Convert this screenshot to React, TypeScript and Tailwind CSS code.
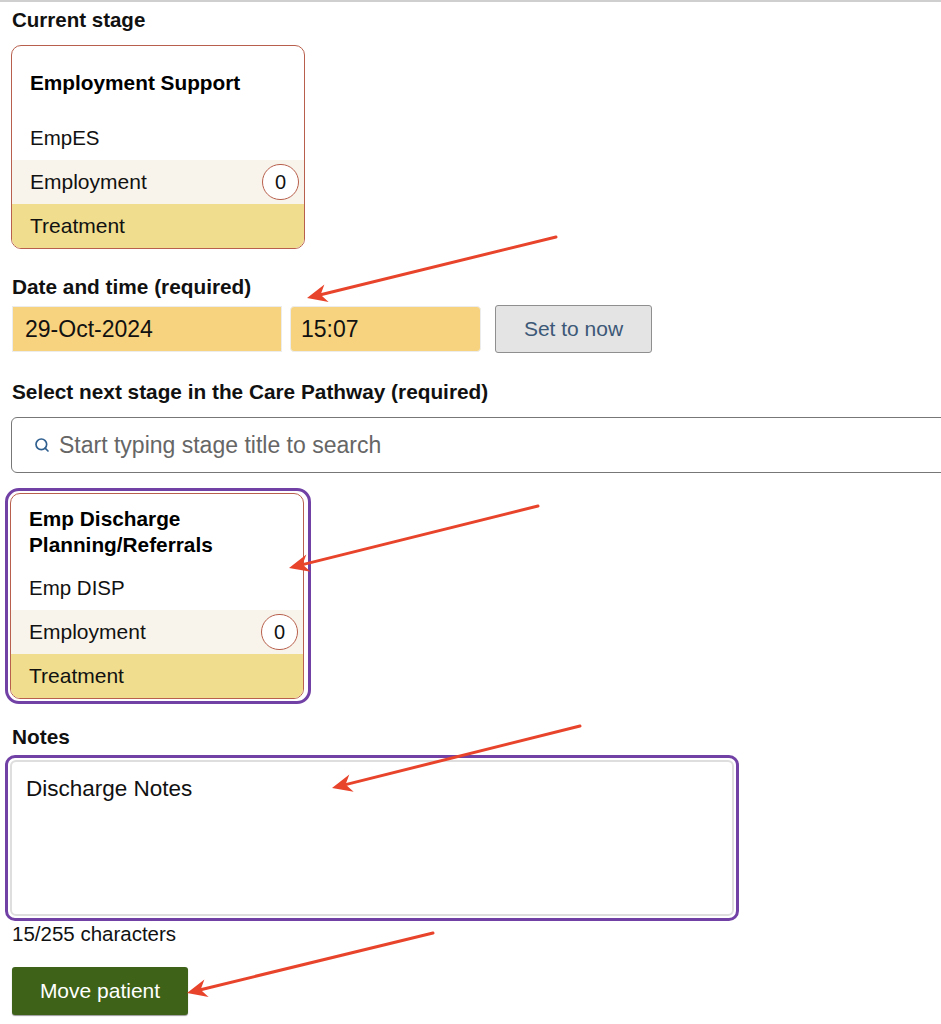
import { Search } from 'lucide-react';

type Stage = { title: string[]; code: string };

function StageCard({ stage, compact }: { stage: Stage; compact?: boolean }) {
  return (
    <div className="w-[294px] rounded-[10px] border border-[#b8604d] overflow-hidden bg-white text-[21px]">
      <div className={compact ? 'px-[18px] pt-[12px] pb-[4px]' : 'px-[18px] pt-[24px] pb-[16px]'}>
        {stage.title.map((t) => (
          <div key={t} className="font-bold leading-[26px] text-black text-[20.8px]">
            {t}
          </div>
        ))}
      </div>
      <div className="px-[18px] h-[48px] pt-[4px] flex items-center text-[20.5px]">{stage.code}</div>
      <div className="h-[44px] bg-[#f8f4eb] flex items-center justify-between pl-[18px] pr-[5px]">
        <span>Employment</span>
        <span className="w-[37px] h-[36px] rounded-full border border-[#b8604d] bg-white flex items-center justify-center text-[20px]">
          0
        </span>
      </div>
      <div className="h-[44px] bg-[#f0dd8e] flex items-center px-[18px]">Treatment</div>
    </div>
  );
}

function Arrow({ x1, y1, x2, y2 }: { x1: number; y1: number; x2: number; y2: number }) {
  const a = Math.atan2(y2 - y1, x2 - x1);
  const len = 22;
  const w = 0.42;
  const p1 = [x2 - len * Math.cos(a - w), y2 - len * Math.sin(a - w)];
  const p2 = [x2 - len * Math.cos(a + w), y2 - len * Math.sin(a + w)];
  const bx = x2 - 14 * Math.cos(a);
  const by = y2 - 14 * Math.sin(a);
  return (
    <g>
      <line x1={x1} y1={y1} x2={bx} y2={by} stroke="#e8442c" strokeWidth={3} strokeLinecap="round" />
      <polygon points={`${x2},${y2} ${p1[0]},${p1[1]} ${bx},${by} ${p2[0]},${p2[1]}`} fill="#e8442c" />
    </g>
  );
}

export default function App() {
  return (
    <div className="relative w-[941px] h-[1024px] overflow-hidden bg-white text-[20px] text-[#111] font-['Liberation_Sans',Arial,sans-serif] border-t-2 border-[#cfcfcf]">
      <div className="flex flex-col pl-[11px]">
        <div className="text-[20.5px] font-bold mt-[6px] leading-[24px] pl-[1px]">Current stage</div>
        <div className="mt-[13px]">
          <StageCard stage={{ title: ['Employment Support'], code: 'EmpES' }} />
        </div>

        <div className="text-[20.8px] font-bold mt-[26px] leading-[24px] pl-[1px]">Date and time (required)</div>
        <div className="flex items-center mt-[6px] gap-[8px]">
          <div className="ml-[1px] w-[270px] h-[46px] bg-[#f8d37f] border border-[#ececec] flex items-center px-[12px] text-[23px]">
            29-Oct-2024
          </div>
          <div className="w-[191px] h-[46px] bg-[#f8d37f] rounded-[4px] border border-[#ececec] flex items-center px-[10px] text-[23px]">
            15:07
          </div>
          <button className="ml-[6px] w-[157px] h-[48px] bg-[#e4e4e4] border border-[#8f8f8f] rounded-[3px] text-[#3c5877] text-[21px]">
            Set to now
          </button>
        </div>

        <div className="text-[20.8px] font-bold mt-[27px] leading-[24px] pl-[1px]">
          Select next stage in the Care Pathway (required)
        </div>
        <div className="mt-[13px] w-[950px] h-[56px] border border-[#777] rounded-[6px] flex items-center pl-[22px] gap-[9px]">
          <Search className="w-[16px] h-[16px] text-[#2f5f8f]" strokeWidth={2.5} />
          <span className="text-[#666] text-[23px]">Start typing stage title to search</span>
        </div>

        <div className="mt-[15px] -ml-[6px] w-[306px] rounded-[14px] border-[3px] border-[#7241a6] p-[2px]">
          <StageCard compact stage={{ title: ['Emp Discharge', 'Planning/Referrals'], code: 'Emp DISP' }} />
        </div>

        <div className="text-[20.8px] font-bold mt-[21px] leading-[24px] pl-[1px]">Notes</div>
        <div className="mt-[6px] -ml-[6px] w-[734px] h-[166px] rounded-[10px] border-[3px] border-[#7241a6] p-[2px]">
          <div className="w-full h-full rounded-[6px] border-2 border-[#dedede] px-[14px] pt-[10px] text-[22.5px]">
            Discharge Notes
          </div>
        </div>
        <div className="text-[20.5px] mt-[0px] pl-[1px] leading-[26px]">15/255 characters</div>

        <button className="mt-[20px] ml-[1px] w-[176px] h-[48px] bg-[#3d6218] text-white rounded-[3px] text-[21px] shadow-[0_1px_1px_rgba(0,0,0,0.4)]">
          Move patient
        </button>
      </div>

      <svg className="absolute inset-0 pointer-events-none" width={941} height={1024}>
        <Arrow x1={556} y1={235} x2={307} y2={296} />
        <Arrow x1={538} y1={504} x2={289} y2={566} />
        <Arrow x1={580} y1={724} x2={332} y2={786} />
        <Arrow x1={433} y1={931} x2={187} y2={991} />
      </svg>
    </div>
  );
}
